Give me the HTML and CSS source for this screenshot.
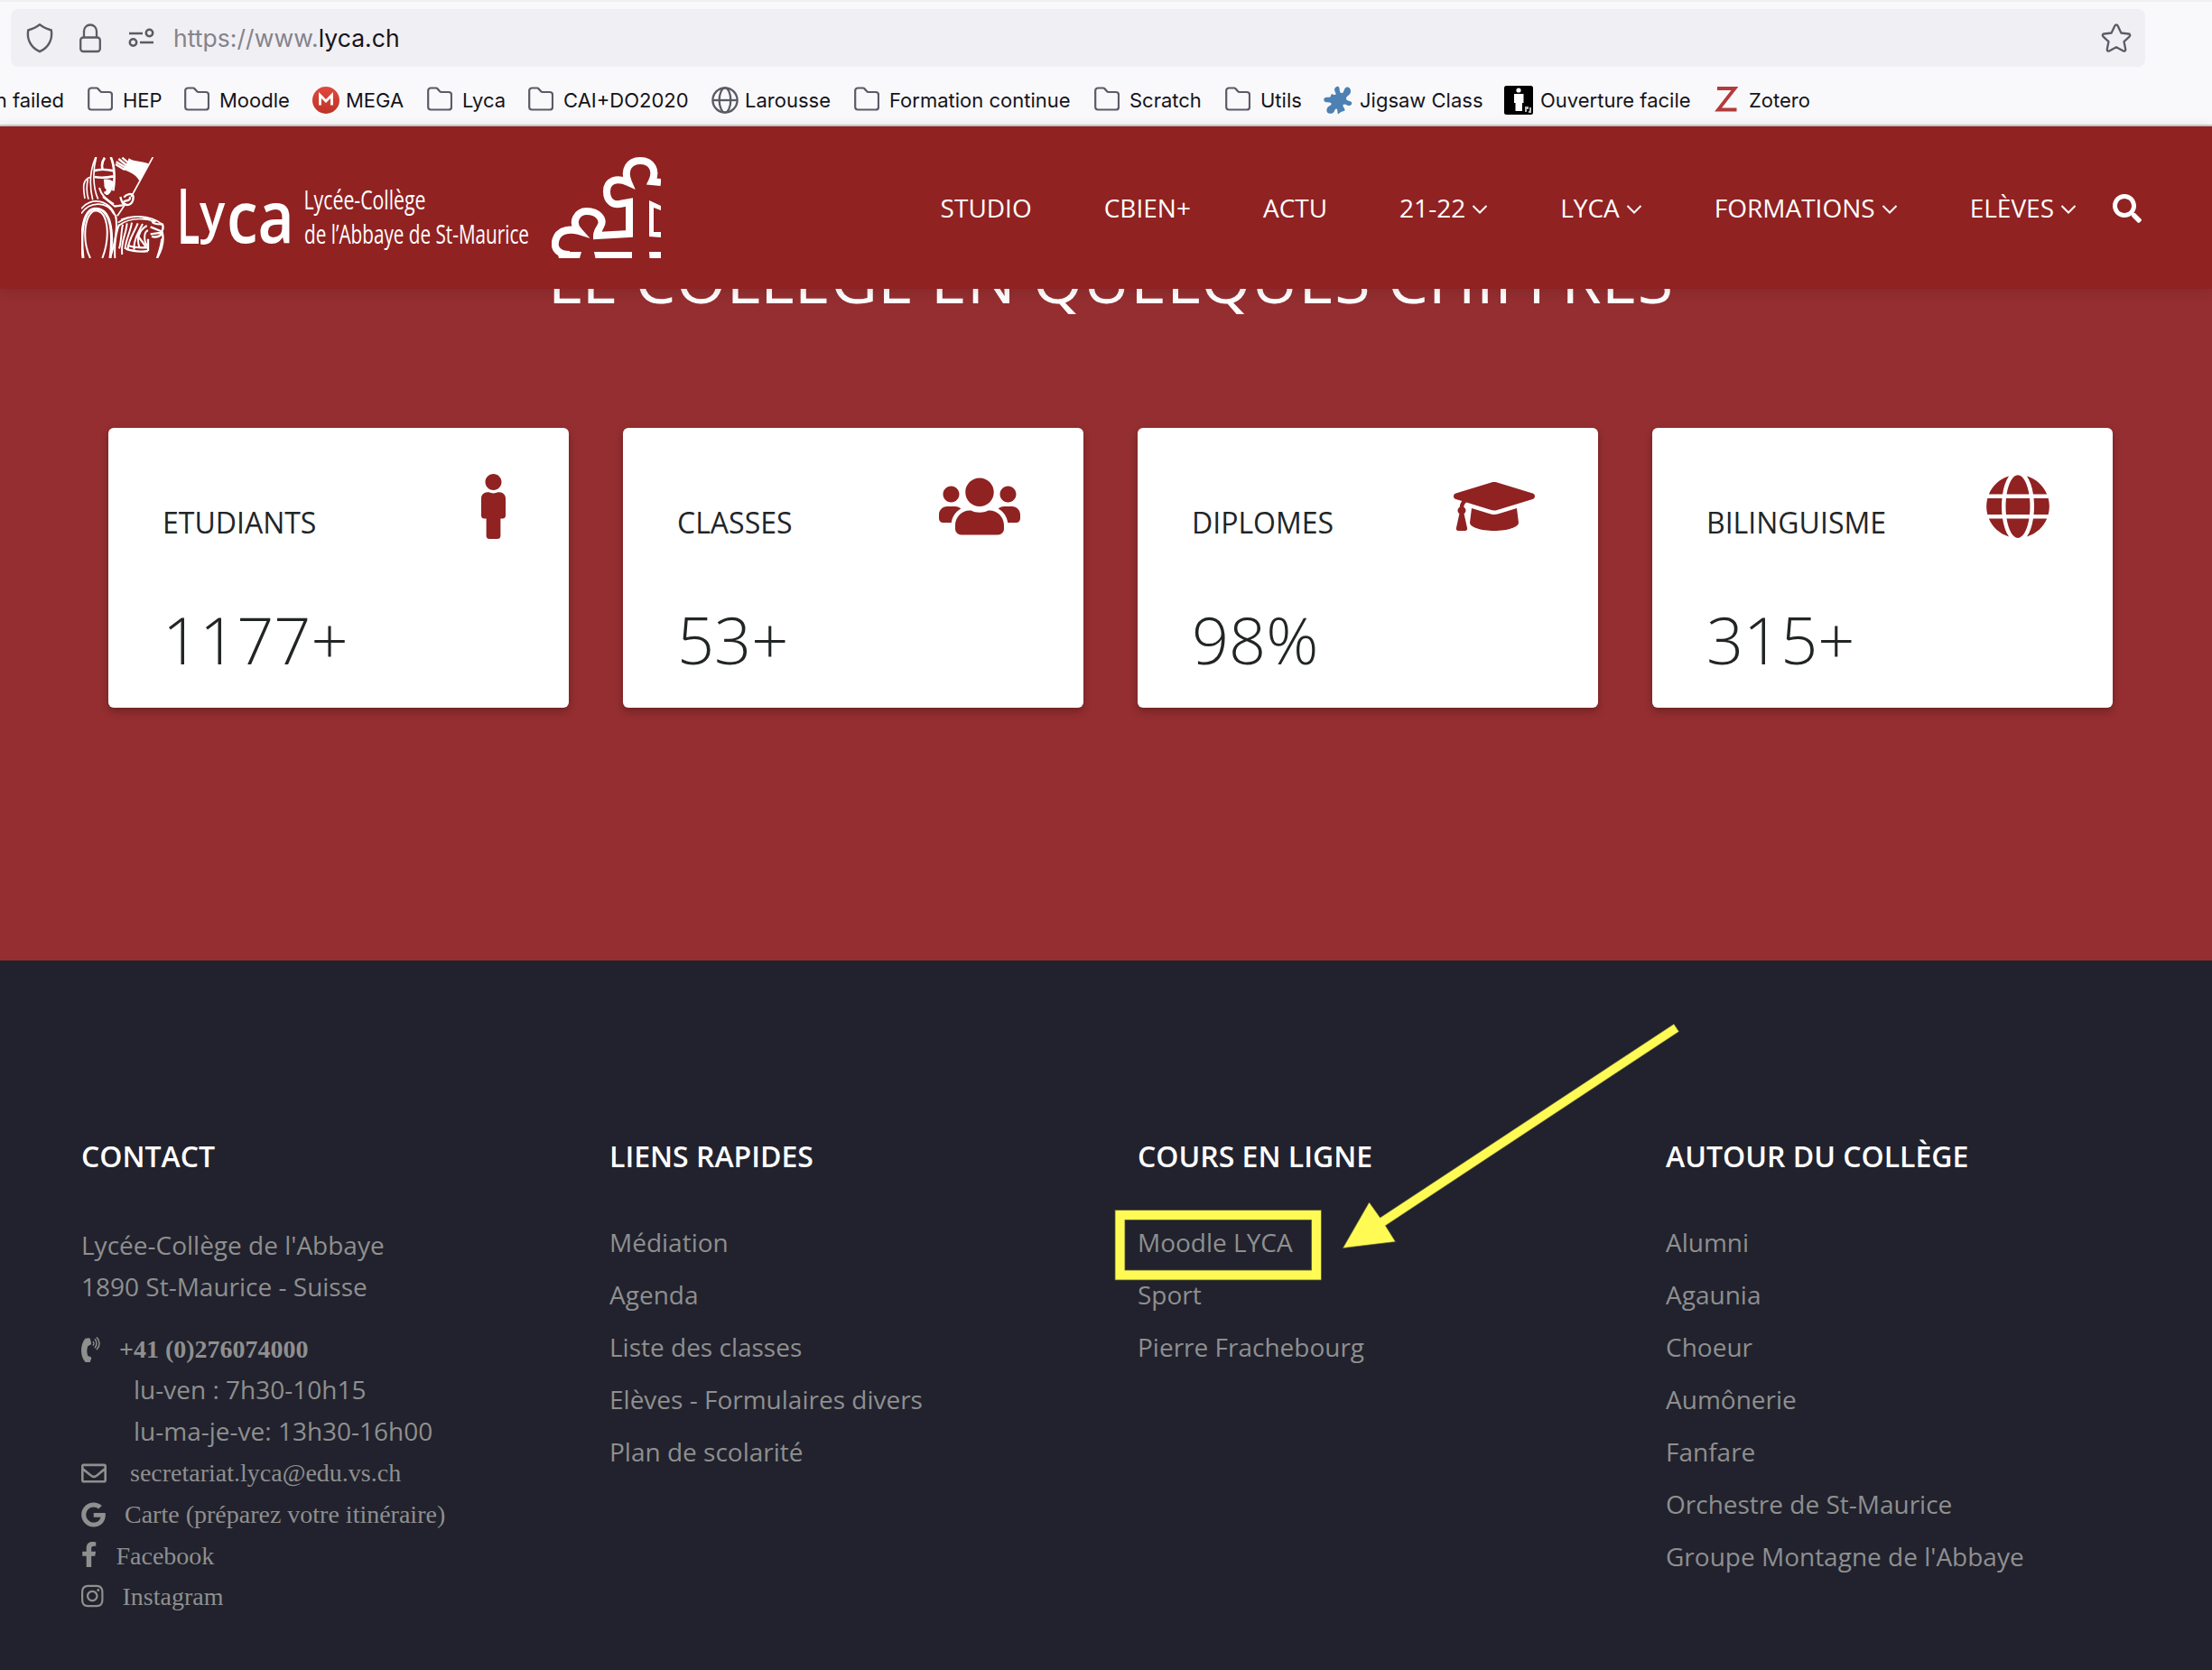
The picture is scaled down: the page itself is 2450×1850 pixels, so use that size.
FILE: index.html
```html
<!DOCTYPE html>
<html lang="fr">
<head>
<meta charset="utf-8">
<title>Lycée-Collège de l'Abbaye de St-Maurice</title>
<link rel="stylesheet" href="styles.css">
</head>
<body>
<svg class="defs" width="0" height="0" aria-hidden="true">
  <symbol id="folder" viewBox="0 0 28 28"><path d="M1.200 4.500a3 3 0 0 1 3-3h5.800a2 2 0 0 1 1.500.700l2.700 3.100a2 2 0 0 0 1.500.700H24a3 3 0 0 1 3 3V22.500a3 3 0 0 1-3 3H4.200a3 3 0 0 1-3-3z" fill="none" stroke="#5b5b66" stroke-width="2.200"/></symbol>
  <symbol id="angle" viewBox="0 0 18 12"><path d="M1.500 2 9 9.500 16.500 2" fill="none" stroke="#fff" stroke-width="2"/></symbol>
</svg>

<div class="browser">
  <div class="urlbar">
    <svg class="shield" width="32" height="34" viewBox="0 0 32 34"><path d="M16 2.200c4 3.500 8 5 12.800 6.300C30.500 18.500 26 27.500 16 32.200 6 27.500 1.500 18.500 3.200 8.500 8 7.200 12 5.700 16 2.200z" fill="none" stroke="#5b5b66" stroke-width="2.400" stroke-linejoin="round"/></svg>
    <svg class="lock" width="26" height="34" viewBox="0 0 26 34"><rect x="2.200" y="16.500" width="21.600" height="15.500" rx="3" fill="none" stroke="#5b5b66" stroke-width="2.300"/><path d="M6 16V9.500a7 7 0 0 1 14 0V16" fill="none" stroke="#5b5b66" stroke-width="2.300"/></svg>
    <svg class="perm" width="30" height="22" viewBox="0 0 30 22"><g fill="none" stroke="#5b5b66" stroke-width="2.500"><path d="M1 6h15M13 16h15"/><circle cx="23.500" cy="5.500" r="3.700"/><circle cx="5.500" cy="16" r="3.700"/></g></svg>
    <span class="url"><span class="scheme">https://www.</span>lyca.ch</span>
    <svg class="star" width="34" height="34" viewBox="0 0 34 34"><path d="M17 2.500c.8 0 1.300.5 1.600 1.100l3.800 7.900 8.300 1c1.500.2 2 1.800 1 2.800l-6.200 5.800 1.700 8.500c.3 1.500-1 2.500-2.300 1.800L17 27.200l-7.900 4.200c-1.300.7-2.600-.3-2.300-1.800l1.700-8.500-6.200-5.800c-1-1-.5-2.600 1-2.800l8.300-1 3.800-7.900c.3-.6.800-1.100 1.600-1.100z" fill="none" stroke="#5b5b66" stroke-width="2.300" stroke-linejoin="round"/></svg>
  </div>
  <div class="bookmarks">
    <span class="bm first">n failed</span>
    <span class="bm"><svg><use href="#folder"/></svg>HEP</span>
    <span class="bm"><svg><use href="#folder"/></svg>Moodle</span>
    <span class="bm"><svg class="wide" viewBox="0 0 30 30"><defs><linearGradient id="mega" x2="0" y2="1"><stop stop-color="#e04a3c"/><stop offset="1" stop-color="#bd3229"/></linearGradient></defs><circle cx="15" cy="15" r="15" fill="url(#mega)"/><path d="M8.500 20.500v-11l6.500 6.500 6.500-6.500v11" fill="none" stroke="#fff" stroke-width="2.800"/></svg>MEGA</span>
    <span class="bm"><svg><use href="#folder"/></svg>Lyca</span>
    <span class="bm"><svg><use href="#folder"/></svg>CAI+DO2020</span>
    <span class="bm"><svg class="wide" viewBox="0 0 30 30"><g fill="none" stroke="#5b5b66" stroke-width="2.300"><circle cx="15" cy="15" r="13.600"/><ellipse cx="15" cy="15" rx="6.300" ry="13.600"/><path d="M1.500 15h27"/></g></svg>Larousse</span>
    <span class="bm"><svg><use href="#folder"/></svg>Formation continue</span>
    <span class="bm"><svg><use href="#folder"/></svg>Scratch</span>
    <span class="bm"><svg><use href="#folder"/></svg>Utils</span>
    <span class="bm"><svg class="jig" viewBox="0 0 32 32"><path d="M9 9c2 1 4 1.500 4.500.5.500-1.500-1.500-3-1.500-5.500C12.500 1.500 15 0 16.500 1c1.500 1 1 3.500 1.500 5.500.5 1.500 2 2 3.500 1C23 6 22.500 2.500 25.500 1.500c3-.5 5 2 4.500 5.500-.5 3-4 4-5 6.500-.5 2 1.500 3 3.500 3.500 2 .5 3.500 1.500 2.500 3.500-1 1.500-3 2-5 1-2-1.500-4-1.500-4.500 0-.5 2 2.500 3.500 2 6-1.500 1-4 .5-5.500 2.500l-2 1.500c-1-2 0-4.500-1.500-6-1.500-.5-2 1.500-3 3.500-1.500 2-4.500 2.500-7 1-2-2-1-5.500 1-7 1.500-1 3.500-2 3-3.500-1-1.500-4-.5-6.500-1.500C.5 17.500-.5 15.500 1 13.500c2-1.500 4-.5 6-1 1.500-.5.500-2.500 2-3.500z" fill="#4d80b3"/></svg>Jigsaw Class</span>
    <span class="bm"><svg class="big" viewBox="0 0 32 32"><rect width="32" height="32" rx="2.500"/><circle cx="16" cy="5" r="2.600" fill="#fff"/><path d="M11 9h10.500v10H20v9h-7.500v-9H11z" fill="#fff"/><path d="M23 23h4v3h-2v3h-2zM28 24h2v6h-3v-2h1z" fill="#bbb"/></svg>Ouverture facile</span>
    <span class="bm"><svg class="zot" viewBox="0 0 32 32"><path d="M5 4h19.500L6 27.500h20.500" fill="none" stroke="#b23b3b" stroke-width="3.800"/></svg>Zotero</span>
  </div>
</div>

<header class="site-header">
  <svg class="logo" width="642" height="112" viewBox="0 0 642 112">
    <svg width="92" height="112" viewBox="18 18 276 336" fill="none" stroke="#fff" stroke-width="6">
      <path d="M66 18C48 60 44 110 56 160M52 84C20 90 24 120 30 156M40 92C34 120 36 140 42 158M68 18C56 60 56 120 74 158" stroke-width="5"/>
      <path d="M116 18c14 30 14 80 8 112M96 20c-10 14-12 26-6 42M60 64c20-8 50-4 68 0M62 84c20 4 44 2 64-2" stroke-width="8"/>
      <path d="M92 92c14-2 30 2 34 10-4 22-8 34-20 42-8 0-14-6-12-12 6 2 8-2 6-8-8-4-4-18-8-32z" fill="#fff" stroke="none"/>
      <path d="M78 120c6 22 18 36 48 54M90 150l40 32"/>
      <path d="M132 42l30 18M134 34l34 20M142 24l30 24M154 20l24 20" stroke-width="7"/>
      <path d="M176 22c16 12 38 8 66 18l-30 58c-16-26-34-30-58-40 10-8 18-20 22-36z" fill="#fff" stroke="none"/>
      <path d="M256 18L184 150M166 172l-28 42" stroke-width="5"/>
      <path d="M160 152c6-10 28-18 31-2 0 22-14 30-27 26-8-4-8-12 8-14 8-2 10-8 6-12M148 150c4 16 8 24 14 28M128 182l28-4" stroke-width="7"/>
      <path d="M18 190C50 148 116 158 134 222M18 206C44 166 104 160 128 210" stroke-width="5"/>
      <path d="M24 354C14 260 26 190 66 190c44 0 62 60 48 164" stroke-width="9"/>
      <path d="M48 354C18 290 30 200 66 196c44 4 48 90 22 158" stroke-width="6"/>
      <path d="M132 210c8 40-4 100-18 144M144 242c-14 36-16 76-14 112" stroke-width="6"/>
      <path d="M140 236c40-28 104-28 148 6M142 246c44-34 96-22 124-14M150 226c40-18 80-12 108 8" stroke-width="5"/>
      <path d="M254 234c10 10 30 6 34 8 4 12 0 22-8 28l-32 4M248 250l34 14M252 282c14 4 28-2 36-10 6 30-6 60-18 82M286 290c-2 24-10 46-16 64" stroke-width="7"/>
      <path d="M156 242c-6 26-4 54-12 80M170 238c-2 36-22 60-16 104M186 236c-4 30-22 60-22 88M206 238c-14 36-30 50-34 90M222 240c-16 30-32 60-28 86M236 246c-30 16-34 50-24 74M240 262c-16 4-14 40-2 50" stroke-width="6"/>
      <path d="M166 322c24 10 46 12 74 8M172 312c24 8 44 8 66 6M240 290v40M206 280l30 40" stroke-width="7"/>
    </svg>
    <g fill="#fff">
      <text class="l-big" transform="translate(106 96) scale(.55 1)" font-size="85">L</text>
      <text class="l-big" transform="translate(131 83) scale(.88 1)" font-size="60">y</text>
      <text class="l-big" transform="translate(161 94.500) scale(.88 1)" font-size="79">ca</text>
      <text class="l-small" x="246.500" y="58" font-size="29" textLength="135" lengthAdjust="spacingAndGlyphs">Lycée-Collège</text>
      <text class="l-small" x="247" y="96" font-size="29" textLength="249" lengthAdjust="spacingAndGlyphs">de l’Abbaye de St-Maurice</text>
    </g>
    <svg x="521" width="121" height="112" viewBox="0 0 121 112">
      <path d="M20 108C4 108 1 98 6 88c4-7 14-9 24-6C21 72 28 60 39 60c12 0 20 9 15 17-2 4-4 6-4 10l36-2V50l-8 1.500C68 54 61 49 61 38c0-12 11-16 24-10C79 14 86 4 98 4c13 0 19 11 13 23l10 1" fill="none" stroke="#fff" stroke-width="8"/>
      <path d="M6 105h27l-2 7H8zM47 105h42v7H48.500zM108 105h13v7h-12.500zM108 48l13 6v5l-8-3v27h8v6l-13-1z" fill="#fff"/>
    </svg>
  </svg>
  <nav class="nav">
    <a>STUDIO</a><a>CBIEN+</a><a>ACTU</a>
    <a>21-22<svg><use href="#angle"/></svg></a>
    <a>LYCA<svg><use href="#angle"/></svg></a>
    <a>FORMATIONS<svg><use href="#angle"/></svg></a>
    <a>ELÈVES<svg><use href="#angle"/></svg></a>
    <svg class="search" viewBox="0 0 512 512" fill="#fff"><path d="M505 442.700L405.300 343c-4.500-4.500-10.600-7-17-7H372c27.600-35.300 44-79.700 44-128C416 93.100 322.900 0 208 0S0 93.100 0 208s93.100 208 208 208c48.300 0 92.700-16.400 128-44v16.300c0 6.400 2.500 12.500 7 17l99.700 99.700c9.400 9.400 24.600 9.400 33.900 0l28.300-28.300c9.400-9.400 9.400-24.600.1-34zM208 336c-70.700 0-128-57.200-128-128 0-70.700 57.200-128 128-128 70.700 0 128 57.200 128 128 0 70.700-57.200 128-128 128z"/></svg>
  </nav>
</header>

<section class="figures">
  <h1>LE COLLÈGE EN QUELQUES CHIFFRES</h1>
  <div class="cards">
    <div class="card"><div class="card-top"><h2>ETUDIANTS</h2><svg width="27" viewBox="0 0 192 512"><path d="M96 0c35.346 0 64 28.654 64 64s-28.654 64-64 64-64-28.654-64-64S60.654 0 96 0m48 144h-11.360c-22.711 10.443-49.590 10.894-73.280 0H48c-26.510 0-48 21.490-48 48v136c0 13.255 10.745 24 24 24h16v136c0 13.255 10.745 24 24 24h64c13.255 0 24-10.745 24-24V352h16c13.255 0 24-10.745 24-24V192c0-26.510-21.490-48-48-48z"/></svg></div><p>1177+</p></div>
    <div class="card"><div class="card-top"><h2>CLASSES</h2><svg width="90" viewBox="0 0 640 512"><path d="M96 224c35.300 0 64-28.700 64-64s-28.700-64-64-64-64 28.700-64 64 28.700 64 64 64zm448 0c35.300 0 64-28.700 64-64s-28.700-64-64-64-64 28.700-64 64 28.700 64 64 64zm32 32h-64c-17.600 0-33.500 7.100-45.100 18.600 40.300 22.100 68.900 62 75.100 109.400h66c17.700 0 32-14.300 32-32v-32c0-35.300-28.700-64-64-64zm-256 0c61.900 0 112-50.100 112-112S381.900 32 320 32 208 82.100 208 144s50.100 112 112 112zm76.800 32h-8.300c-20.800 10-43.900 16-68.500 16s-47.600-6-68.500-16h-8.300C179.600 288 128 339.600 128 403.200V432c0 26.500 21.500 48 48 48h288c26.500 0 48-21.500 48-48v-28.800c0-63.600-51.600-115.200-115.200-115.200zm-223.700-13.400C161.500 263.100 145.600 256 128 256H64c-35.300 0-64 28.700-64 64v32c0 17.700 14.300 32 32 32h65.900c6.300-47.400 34.900-87.300 75.200-109.400z"/></svg></div><p>53+</p></div>
    <div class="card"><div class="card-top"><h2>DIPLOMES</h2><svg width="90" viewBox="0 0 640 512"><path d="M622.340 153.200L343.400 67.500c-15.200-4.670-31.600-4.670-46.790 0L17.660 153.200c-23.540 7.230-23.540 38.360 0 45.590l48.630 14.940c-10.670 13.190-17.230 29.280-17.880 46.900C38.780 266.150 32 276.110 32 288c0 10.780 5.680 19.850 13.860 25.650L20.330 428.530C18.110 438.520 25.710 448 35.940 448h56.110c10.240 0 17.840-9.480 15.620-19.470L82.140 313.650C90.320 307.850 96 298.780 96 288c0-11.570-6.470-21.250-15.660-26.870.76-15.020 8.440-28.300 20.690-36.720L296.600 284.500c9.060 2.780 26.440 6.250 46.790 0l278.950-85.700c23.550-7.240 23.550-38.360 0-45.600zM352.790 315.090c-28.530 8.760-52.840 3.920-65.590 0l-145.020-44.550L128 384c0 35.350 85.960 64 192 64s192-28.650 192-64l-14.180-113.470-145.030 44.560z"/></svg></div><p>98%</p></div>
    <div class="card"><div class="card-top"><h2>BILINGUISME</h2><svg width="70" viewBox="0 0 496 512"><path d="M336.500 160C322 70.700 287.800 8 248 8s-74 62.700-88.500 152h177zM152 256c0 22.200 1.200 43.500 3.300 64h185.300c2.100-20.500 3.300-41.800 3.300-64s-1.200-43.500-3.300-64H155.300c-2.100 20.500-3.300 41.800-3.300 64zm324.700-96c-28.600-67.900-86.500-120.400-158-141.600 24.400 33.800 41.200 84.700 50 141.600h108zM177.200 18.400C105.800 39.600 47.800 92.100 19.300 160h108c8.700-56.900 25.500-107.800 49.900-141.600zM487.400 192H372.700c2.100 21 3.300 42.500 3.300 64s-1.200 43-3.300 64h114.600c5.500-20.500 8.600-41.800 8.600-64s-3.100-43.500-8.500-64zM120 256c0-21.500 1.200-43 3.300-64H8.600C3.200 212.500 0 233.800 0 256s3.200 43.500 8.600 64h114.600c-2-21-3.200-42.500-3.200-64zm39.500 96c14.500 89.300 48.700 152 88.500 152s74-62.700 88.500-152h-177zm159.300 141.600c71.400-21.200 129.400-73.700 158-141.600h-108c-8.800 56.900-25.600 107.800-50 141.600zM19.300 352c28.600 67.900 86.500 120.400 158 141.600-24.400-33.800-41.200-84.700-50-141.600h-108z"/></svg></div><p>315+</p></div>
  </div>
</section>

<footer class="footer">
  <div class="col contact">
    <h3>CONTACT</h3>
    <div class="line">Lycée-Collège de l'Abbaye</div>
    <div class="line">1890 St-Maurice - Suisse</div>
    <div class="row phone"><svg width="21" height="28" viewBox="0 0 21 28"><path d="M4.500.800 8.500.300c.7 0 1.200.3 1.400.9l1.200 4.600c.2.700 0 1.200-.5 1.600L7.300 9.200c-1.300 3.800-1.300 7 0 10.800l3.300 1.300c.5.400.7.900.5 1.600l-1.200 3.700c-.2.600-.7.900-1.400.9l-4-.5C-1.500 20.500-1.500 7.500 4.500.800z" transform="translate(0 1)"/><path d="M13.300 5.500c.8.800.8 2.700 0 3.600M15.300 2.800c2.200 2.300 2.200 6.700 0 9M17.300.900c3.700 3.600 3.700 9.300 0 12.800" fill="none" stroke="#8f8f8f" stroke-width="1.500" stroke-linecap="round"/></svg><b>+41 (0)276074000</b></div>
    <div class="line hours">lu-ven : 7h30-10h15</div>
    <div class="line hours">lu-ma-je-ve: 13h30-16h00</div>
    <div class="row mail"><svg width="28" height="28" viewBox="0 0 512 512"><path d="M464 64H48C21.490 64 0 85.490 0 112v288c0 26.510 21.490 48 48 48h416c26.510 0 48-21.490 48-48V112c0-26.510-21.490-48-48-48zm0 48v40.805c-22.422 18.259-58.168 46.651-134.587 106.490-16.841 13.247-50.201 45.072-73.413 44.701-23.208.375-56.579-31.459-73.413-44.701C106.180 199.465 70.425 171.067 48 152.805V112h416zM48 400V214.398c22.914 18.251 55.409 43.862 104.938 82.646 21.857 17.205 60.134 55.186 103.062 54.955 42.717.231 80.509-37.199 103.053-54.947 49.528-38.783 82.032-64.401 104.947-82.653V400H48z"/></svg>secretariat.lyca@edu.vs.ch</div>
    <div class="row map"><svg width="27" height="28" viewBox="0 0 488 512"><path d="M488 261.800C488 403.300 391.100 504 248 504 110.800 504 0 393.200 0 256S110.800 8 248 8c66.800 0 123 24.500 166.300 64.900l-67.500 64.900C258.500 52.600 94.300 116.600 94.300 256c0 86.500 69.100 156.600 153.700 156.600 98.200 0 135-70.400 140.800-106.900H248v-85.300h236.100c2.300 12.700 3.900 24.900 3.900 41.400z"/></svg>Carte (préparez votre itinéraire)</div>
    <div class="row fb"><svg width="17.500" height="28" viewBox="0 0 320 512"><path d="M279.140 288l14.220-92.660h-88.910v-60.130c0-25.350 12.420-50.060 52.240-50.060h40.420V6.260S260.430 0 225.360 0c-73.220 0-121.080 44.380-121.080 124.720v70.620H22.890V288h81.390v224h100.170V288z"/></svg>Facebook</div>
    <div class="row insta"><svg width="24.500" height="28" viewBox="0 0 448 512"><path d="M224.100 141c-63.600 0-114.900 51.300-114.900 114.900s51.300 114.900 114.900 114.900S339 319.500 339 255.900 287.700 141 224.100 141zm0 189.600c-41.100 0-74.700-33.500-74.700-74.700s33.500-74.700 74.700-74.700 74.700 33.500 74.700 74.700-33.600 74.700-74.700 74.700zm146.400-194.300c0 14.900-12 26.800-26.800 26.800-14.900 0-26.800-12-26.800-26.800s12-26.800 26.800-26.800 26.800 12 26.800 26.800zm76.100 27.200c-1.700-35.900-9.900-67.700-36.200-93.900-26.200-26.200-58-34.400-93.900-36.200-37-2.100-147.900-2.100-184.900 0-35.800 1.700-67.600 9.900-93.900 36.100s-34.400 58-36.200 93.900c-2.100 37-2.100 147.900 0 184.900 1.700 35.900 9.900 67.700 36.200 93.900s58 34.400 93.900 36.200c37 2.100 147.900 2.100 184.900 0 35.900-1.700 67.700-9.900 93.900-36.200 26.200-26.200 34.400-58 36.200-93.900 2.100-37 2.100-147.800 0-184.800zM398.800 388c-7.800 19.600-22.900 34.700-42.600 42.600-29.500 11.700-99.500 9-132.100 9s-102.700 2.600-132.100-9c-19.600-7.800-34.700-22.900-42.600-42.600-11.700-29.500-9-99.500-9-132.100s-2.600-102.700 9-132.100c7.800-19.600 22.900-34.700 42.600-42.600 29.500-11.700 99.500-9 132.100-9s102.700-2.600 132.100 9c19.600 7.800 34.700 22.900 42.600 42.600 11.700 29.500 9 99.500 9 132.100s2.700 102.700-9 132.100z"/></svg>Instagram</div>
  </div>
  <div class="col">
    <h3>LIENS RAPIDES</h3>
    <ul><li>Médiation</li><li>Agenda</li><li>Liste des classes</li><li>Elèves - Formulaires divers</li><li>Plan de scolarité</li></ul>
  </div>
  <div class="col">
    <h3>COURS EN LIGNE</h3>
    <ul><li>Moodle LYCA</li><li>Sport</li><li>Pierre Frachebourg</li></ul>
  </div>
  <div class="col">
    <h3>AUTOUR DU COLLÈGE</h3>
    <ul><li>Alumni</li><li>Agaunia</li><li>Choeur</li><li>Aumônerie</li><li>Fanfare</li><li>Orchestre de St-Maurice</li><li>Groupe Montagne de l'Abbaye</li></ul>
  </div>
  <svg class="annotation" width="640" height="300" viewBox="1230 1124 640 300">
    <rect x="1240.500" y="1346" width="217.500" height="66.500" fill="none" stroke="#77763a" stroke-width="11.500"/>
    <rect x="1240.500" y="1346" width="217.500" height="66.500" fill="none" stroke="#fffb54" stroke-width="10"/>
    <path d="M1854 1134.500 1859.500 1142.700 1534.400 1357.700 1545.500 1375.500 1487.500 1382.500 1516.500 1332 1528.600 1349z" fill="#fffb54" stroke="#77763a" stroke-width=".6"/>
  </svg>
</footer>
</body>
</html>
```

FILE: styles.css
```css
* { box-sizing: border-box; margin: 0; padding: 0; }
body { width: 2450px; height: 1850px; overflow: hidden; font-family: "Open Sans", sans-serif; background: #21222d; }
.defs { display: block; height: 0; }

.browser { height: 140px; padding: 8px 74px 0 0; background: #f9f9fb; border-top: 2px solid #f0f0f2; border-bottom: 2px solid #cccccf; font-family: Inter, sans-serif; color: #15141a; }
.urlbar { display: flex; align-items: center; height: 64px; margin-left: 12px; padding: 0 15px; background: #f0eff4; border-radius: 8px; }
.shield { margin-left: 1px; }
.lock { margin-left: 27px; }
.perm { margin-left: 29px; }
.url { margin-left: 20px; font-size: 26.500px; line-height: 64px; letter-spacing: .05px; }
.scheme { color: #84838b; }
.star { margin-left: auto; }
.bookmarks { display: grid; grid-template-columns: 97px 107px 141px 128px 112px 202px 159px 266px 145px 109px 200px 231px 200px; height: 64px; margin-top: 5px; align-items: center; }
.bm { display: flex; align-items: center; gap: 11px; font-size: 22px; line-height: 28px; white-space: nowrap; }
.bm svg { width: 28px; height: 28px; margin-top: -2px; flex: none; }
.bm .wide { width: 30px; height: 30px; margin-left: 1px; margin-right: -4px; }
.bm .wide, .bm .big, .bm .jig { margin-top: 0; }
.bm .big, .bm .jig, .bm .zot { width: 32px; height: 32px; margin-right: -3px; }
.first { justify-content: flex-end; width: 71px; }

.site-header { position: relative; z-index: 2; display: flex; align-items: center; justify-content: space-between; height: 180px; padding: 0 78px 0 90px; background: #902222; box-shadow: 0 2px 14px rgba(0, 0, 0, .14); }
.logo { display: block; }
.l-big { font-family: "Open Sans", sans-serif; font-weight: 600; }
.l-small { font-family: "Open Sans", sans-serif; font-weight: 400; }
.nav { display: flex; align-items: center; gap: 80px; color: #fff; font-size: 28px; line-height: 38px; }
.nav a { display: flex; align-items: center; }
.nav a svg { width: 18px; height: 12px; margin: 4px 0 0 7px; }
.nav .search { width: 32px; height: 32px; margin: 2px 0 0 -40px; }

.figures { height: 744px; padding: 0 110px 0 120px; background: #952e30; overflow: hidden; }
.figures h1 { margin-top: -48px; color: #fff; font-size: 72px; font-weight: 400; line-height: 72px; text-align: center; white-space: nowrap; }
.cards { display: grid; grid-template-columns: repeat(4, 510px); gap: 60px; margin-top: 130px; }
.card { height: 310px; padding: 51px 70px 0 60px; background: #fff; border-radius: 6px; box-shadow: 0 4px 10px rgba(0, 0, 0, .26); color: #222526; }
.card-top { display: flex; justify-content: space-between; }
.card h2 { margin-top: 28px; font-size: 32px; font-weight: 400; line-height: 51px; }
.card svg { height: 72px; fill: #902222; }
.card p { font-size: 72px; font-weight: 300; line-height: 98px; margin-top: 55px; }

.footer { position: relative; display: grid; grid-template-columns: repeat(4, 585px); height: 786px; padding: 192.500px 0 0 90px; background: #21222d; color: #8f8f8f; font-size: 28px; }
.footer h3 { color: #fff; font-size: 32px; font-weight: 600; line-height: 48px; margin-bottom: 42px; }
.footer ul { list-style: none; }
.footer li { line-height: 58px; }
.contact h3 { margin-bottom: 52.500px; }
.line { line-height: 45.600px; }
.hours { padding-left: 58px; }
.row { display: flex; align-items: center; height: 45.600px; font: 28px/45.600px "Liberation Serif", serif; white-space: nowrap; }
.row svg { fill: #8f8f8f; }
.phone { height: 44px; margin-top: 25px; gap: 21px; }
.mail { margin-top: 1px; gap: 26px; }
.map { gap: 21px; }
.fb { gap: 21px; }
.insta { gap: 21px; }
.fb svg, .insta svg { margin-top: -2px; }
.annotation { position: absolute; left: 1230px; top: 60px; }
```
